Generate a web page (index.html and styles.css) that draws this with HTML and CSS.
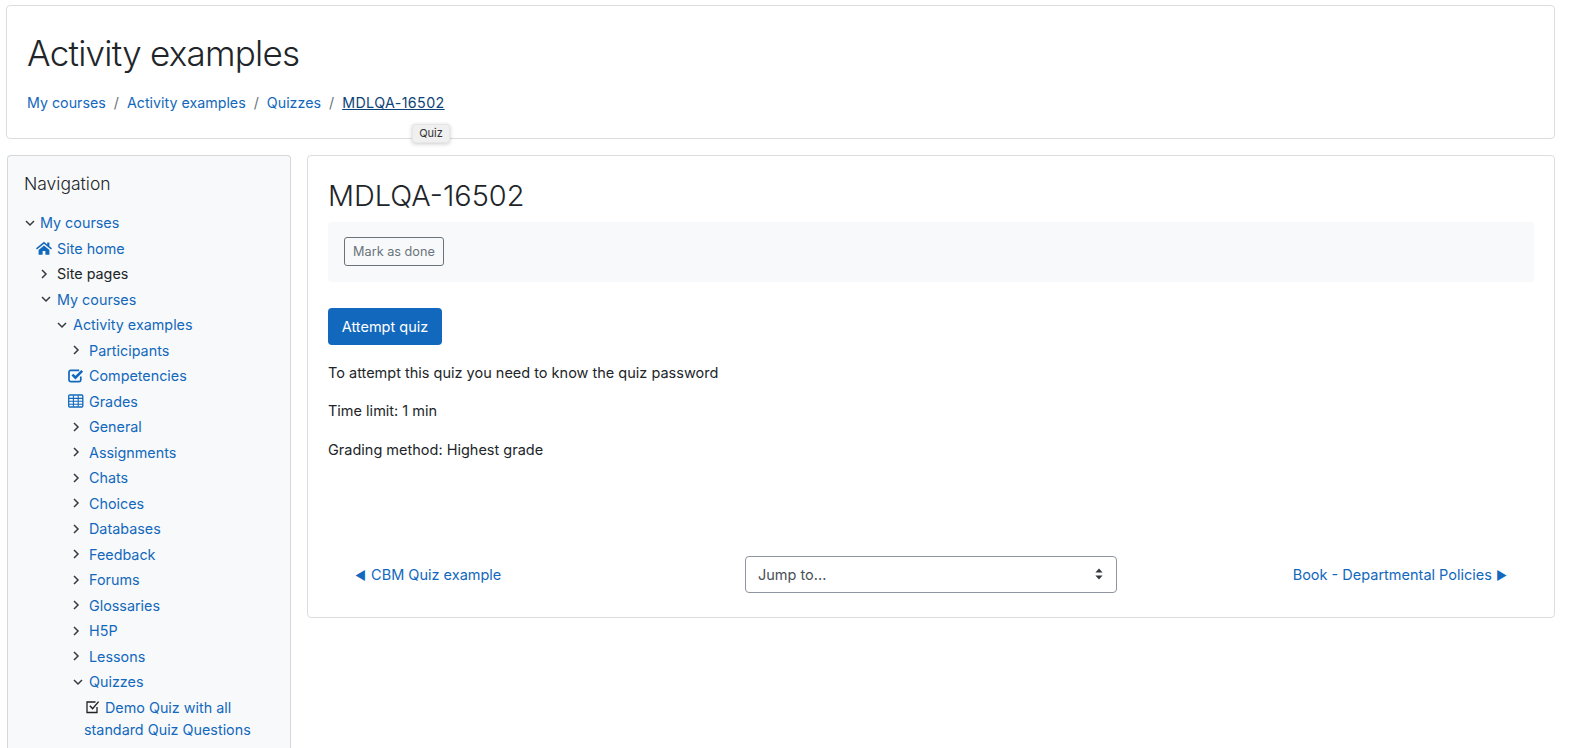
FILE: index.html
```html
<!DOCTYPE html>
<html lang="en">
<head>
<meta charset="utf-8">
<title>MDLQA-16502</title>
<link rel="stylesheet" href="styles.css">
</head>
<body>
<svg class="defs" width="0" height="0" aria-hidden="true">
  <symbol id="down" viewBox="0 0 12 12"><path d="M2 4l4 4 4-4" fill="none" stroke="#343a40" stroke-width="1.5"/></symbol>
  <symbol id="right" viewBox="0 0 12 12"><path d="M4 2l4 4-4 4" fill="none" stroke="#343a40" stroke-width="1.5"/></symbol>
</svg>
<header class="card page-header">
  <h1 class="course-title">Activity examples</h1>
  <nav class="crumbs">
    <a href="#">My courses</a><span class="sep">/</span>
    <a href="#">Activity examples</a><span class="sep">/</span>
    <a href="#">Quizzes</a><span class="sep">/</span>
    <a href="#" class="current">MDLQA-16502</a>
  </nav>
  <div class="tooltip">Quiz</div>
</header>
<div class="columns">
  <aside class="card sidebar">
    <h2 class="nav-title">Navigation</h2>
    <ul class="tree">
      <li class="row l0"><svg class="ico dn"><use href="#down"/></svg><a href="#">My courses</a></li>
      <li class="row l1"><svg class="ico blue" viewBox="0 0 16 14"><path d="M8 .8L0 7.3l1 1.1L8 2.8l7 5.6 1-1.1-2.6-2.1V1.4h-2.2v2z" fill="#1268bc"/><path d="M2.6 9v4.8h4V10h2.8v3.8h4V9L8 4.5z" fill="#1268bc"/></svg><a href="#">Site home</a></li>
      <li class="row l1"><svg class="ico"><use href="#right"/></svg><span class="plain">Site pages</span></li>
      <li class="row l1"><svg class="ico dn"><use href="#down"/></svg><a href="#">My courses</a></li>
      <li class="row l2"><svg class="ico dn"><use href="#down"/></svg><a href="#">Activity examples</a></li>
      <li class="row l3"><svg class="ico"><use href="#right"/></svg><a href="#">Participants</a></li>
      <li class="row l3"><svg class="ico blue" viewBox="0 0 16 14"><path d="M12.8 7.5v3.6a1.6 1.6 0 0 1-1.6 1.6H2.6A1.6 1.6 0 0 1 1 11.1V3a1.6 1.6 0 0 1 1.6-1.6h8.6" fill="none" stroke="#1268bc" stroke-width="1.7"/><path d="M4.4 5.6L7.4 8.6 14.2 1.8" fill="none" stroke="#1268bc" stroke-width="2.6"/></svg><a href="#">Competencies</a></li>
      <li class="row l3"><svg class="ico blue" viewBox="0 0 16 14"><rect x=".7" y="1" width="14.1" height="12" rx="1" fill="none" stroke="#1268bc" stroke-width="1.3"/><path d="M1 4.4h14M1 7.3h14M1 10.2h14M5.4 1.5v11M10.2 1.5v11" stroke="#1268bc" stroke-width="1.1"/></svg><a href="#">Grades</a></li>
      <li class="row l3"><svg class="ico"><use href="#right"/></svg><a href="#">General</a></li>
      <li class="row l3"><svg class="ico"><use href="#right"/></svg><a href="#">Assignments</a></li>
      <li class="row l3"><svg class="ico"><use href="#right"/></svg><a href="#">Chats</a></li>
      <li class="row l3"><svg class="ico"><use href="#right"/></svg><a href="#">Choices</a></li>
      <li class="row l3"><svg class="ico"><use href="#right"/></svg><a href="#">Databases</a></li>
      <li class="row l3"><svg class="ico"><use href="#right"/></svg><a href="#">Feedback</a></li>
      <li class="row l3"><svg class="ico"><use href="#right"/></svg><a href="#">Forums</a></li>
      <li class="row l3"><svg class="ico"><use href="#right"/></svg><a href="#">Glossaries</a></li>
      <li class="row l3"><svg class="ico"><use href="#right"/></svg><a href="#">H5P</a></li>
      <li class="row l3"><svg class="ico"><use href="#right"/></svg><a href="#">Lessons</a></li>
      <li class="row l3"><svg class="ico dn"><use href="#down"/></svg><a href="#">Quizzes</a></li>
      <li class="leaf"><svg class="quiz-ico" viewBox="0 0 14 14"><path d="M11 7v5.5H1V2h8.5" fill="none" stroke="#222" stroke-width="1.3"/><path d="M3.8 5.8l2.8 2.8 6-7" fill="none" stroke="#222" stroke-width="1.4"/></svg><a href="#">Demo Quiz with all standard Quiz Questions</a></li>
    </ul>
  </aside>
  <main class="card content">
    <h2 class="activity-title">MDLQA-16502</h2>
    <div class="completion"><button class="done" type="button">Mark as done</button></div>
    <button class="attempt" type="button">Attempt quiz</button>
    <p class="info">To attempt this quiz you need to know the quiz password</p>
    <p class="info">Time limit: 1 min</p>
    <p class="info">Grading method: Highest grade</p>
    <div class="pager">
      <a href="#" class="prev"><span class="tri left">◄</span> CBM Quiz example</a>
      <div class="jump"><span>Jump to...</span><svg class="updown" viewBox="0 0 8 12"><path d="M4 0.5L7.6 4.6H.4zM4 11.5L.4 7.4h7.2z" fill="#343a40"/></svg></div>
      <a href="#" class="next">Book - Departmental Policies <span class="tri">►</span></a>
    </div>
  </main>
</div>
</body>
</html>
```
FILE: styles.css
```css
* { box-sizing: border-box; }
html, body { height: 748px; overflow: hidden; }
body {
  margin: 0;
  padding: 5px 15px 0 6px;
  background: #fff;
  color: #212529;
  font-family: Inter, "Liberation Sans", sans-serif;
  font-size: 14.5px;
  line-height: 21px;
}
a { color: #1268bc; text-decoration: none; }
.defs { position: absolute; }
.card { background: #fff; border: 1px solid #dcdde0; border-radius: 4px; }
.page-header { position: relative; height: 134px; padding: 25px 20px 0; }
.course-title { margin: 0; font-size: 35px; line-height: 44px; font-weight: 300; letter-spacing: -.75px; }
.crumbs { margin-top: 17px; display: flex; align-items: center; font-size: 14.25px; }
.sep { margin: 0 8px; color: #6a737b; }
.current { color: #0e4377; text-decoration: underline; letter-spacing: .4px; }
.tooltip {
  position: absolute; left: 405px; top: 118px; width: 38px; height: 19px;
  background: #f0f0f0; border-radius: 3px; border: 1px solid #e6e6e6;
  box-shadow: 0 1px 4px rgba(0,0,0,.2);
  font-size: 11px; line-height: 17px; text-align: center; color: #333;
}
.columns { display: flex; gap: 16px; margin-top: 16px; align-items: flex-start; padding-left: 1px; }
.sidebar {
  width: 284px; flex: none; height: 593px;
  background: #f8f9fa; padding: 16px 16px 0;
  border-color: #d5d7da; border-bottom: 0; border-radius: 4px 4px 0 0;
  font-size: 14.35px;
}
.nav-title { margin: 0 0 14px; font-size: 17.5px; line-height: 24px; font-weight: 300; }
.tree { list-style: none; margin: 0; padding: 0; }
.row { display: flex; align-items: center; height: 25.5px; }
.l0 { padding-left: 0; }
.l1 { padding-left: 12px; }
.l2 { padding-left: 28px; }
.l3 { padding-left: 44px; }
.ico { width: 12px; height: 12px; margin: 0 7px 0 2px; flex: none; }
.ico.dn { margin: 0 5px 0 4px; }
.l0 .ico.dn { margin: 0 4px 0 0; }
.ico.blue { width: 16px; height: 14px; margin: 0 5px 0 0; }
.plain { color: #212529; }
.leaf { padding: 2px 0 0 60px; line-height: 22.5px; }
.quiz-ico { width: 14px; height: 14px; margin: 0 5px 0 2px; vertical-align: -1px; }
.content { flex: 1; height: 463px; padding: 20px; }
.activity-title { margin: 0; font-size: 28.9px; line-height: 40px; font-weight: 300; }
.completion { background: #f8f9fa; height: 60px; margin-top: 6px; padding: 15px 16px; border-radius: 3px; }
.done {
  display: block; width: 100px; height: 29px; padding: 0;
  background: transparent; border: 1px solid #6a737b; border-radius: 3px;
  color: #6a737b; font: inherit; font-size: 12.7px;
}
.attempt {
  display: block; width: 114px; height: 37px; margin-top: 26px; padding: 0;
  background: #1268bc; color: #fff; border: 0; border-radius: 4px; font: inherit;
}
.info { margin: 0 0 17.4px; }
.attempt + .info { margin-top: 17px; }
.pager { margin-top: 96px; display: grid; grid-template-columns: 1fr auto 1fr; align-items: center; padding: 0 27px; }
.prev, .next { padding-top: 2px; }
.next { justify-self: end; }
.tri { font-size: 12px; }
.tri.left { margin-right: 1px; }
.jump {
  width: 372px; height: 37px; display: flex; align-items: center; justify-content: space-between;
  padding: 0 13px 0 12px; border: 1px solid #8f959e; border-radius: 4px; color: #495057;
}
.updown { width: 8px; height: 12px; }
```
